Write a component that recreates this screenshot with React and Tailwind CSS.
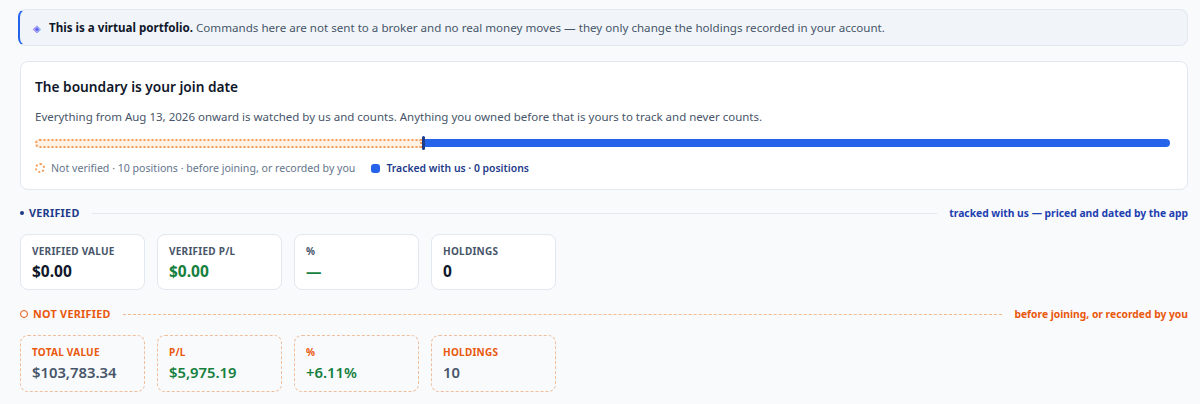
import React from 'react';

const verified = [
  { label: 'Verified value', value: '$0.00', tone: 'text-[#0f172a]' },
  { label: 'Verified P/L', value: '$0.00', tone: 'text-[#15803d]' },
  { label: '%', value: '—', tone: 'text-[#15803d]' },
  { label: 'Holdings', value: '0', tone: 'text-[#0f172a]' },
];

const unverified = [
  { label: 'Total value', value: '$103,783.34', tone: 'text-[#475569]' },
  { label: 'P/L', value: '$5,975.19', tone: 'text-[#15803d]' },
  { label: '%', value: '+6.11%', tone: 'text-[#15803d]' },
  { label: 'Holdings', value: '10', tone: 'text-[#475569]' },
];

const App = () => {
  return (
    <div
      className="min-h-screen bg-[#f8fafc] pl-[18px] pr-3 pt-[9px] pb-4 text-[#0f172a]"
      style={{ fontFamily: '"Noto Sans", "Open Sans", sans-serif' }}
    >
      {/* Banner */}
      <div className="flex items-center gap-2 h-[37px] px-[13px] bg-[#f1f5f9] border border-[#e2e8f0] border-l-2 border-l-[#2563eb] rounded-lg text-[11.6px]">
        <span className="text-[#6366f1] text-[10px] leading-none">◈</span>
        <p className="text-[#475569] whitespace-nowrap">
          <b className="font-bold text-[#0f172a]">This is a virtual portfolio.</b>{' '}
          Commands here are not sent to a broker and no real money moves — they only change the holdings recorded in your account.
        </p>
      </div>

      {/* Boundary card */}
      <div className="mt-[15px] ml-[2px] bg-white border border-[#e2e8f0] rounded-lg px-[14px] pt-[15px] pb-[11px]">
        <h2 className="text-[13.7px] font-semibold leading-5">The boundary is your join date</h2>
        <p className="mt-[10px] text-[11.5px] text-[#475569] leading-5">
          Everything from Aug 13, 2026 onward is watched by us and counts. Anything you owned before that is yours to track and never counts.
        </p>
        <div className="mt-[9px] flex items-center h-[14px] pr-[3px]">
          <div className="w-[387px] h-[9px] rounded-l-full border-2 border-dotted border-[#f59e5b] bg-[#fff1e4]" />
          <div className="w-[3px] h-[14px] bg-[#1e3a8a] rounded-sm" />
          <div className="flex-1 h-[8px] rounded-r-full bg-[#2563eb]" />
        </div>
        <div className="mt-[8px] flex items-center gap-4 text-[10.6px] leading-5">
          <span className="flex items-center gap-[6px] text-[#64748b]">
            <span className="w-[10px] h-[10px] rounded-full border-2 border-dotted border-[#f59e5b]" />
            Not verified · 10 positions · before joining, or recorded by you
          </span>
          <span className="flex items-center gap-[6px] font-semibold text-[#1e3a8a] text-[10.4px]">
            <span className="w-[9px] h-[9px] rounded-[3px] bg-[#2563eb]" />
            Tracked with us · 0 positions
          </span>
        </div>
      </div>

      {/* Verified section */}
      <div className="mt-[15px] ml-[2px] flex items-center gap-3 text-[10.8px] font-bold leading-4">
        <span className="flex items-center gap-[5px] text-[#1e3a8a] tracking-wide">
          <span className="w-[4px] h-[4px] rounded-full bg-[#1e3a8a]" />
          VERIFIED
        </span>
        <span className="flex-1 border-t border-[#e2e8f0]" />
        <span className="text-[#1e40af] text-[10.3px]">tracked with us — priced and dated by the app</span>
      </div>
      <div className="mt-[13px] ml-[2px] flex gap-3">
        {verified.map((c) => (
          <div key={c.label} className="w-[125px] h-[56px] bg-white border border-[#e2e8f0] rounded-lg px-[11px] pt-[10px]">
            <div className="text-[10px] font-bold uppercase tracking-wide text-[#475569] leading-3">{c.label}</div>
            <div className={`mt-[4px] text-[15.5px] font-bold leading-5 ${c.tone}`}>{c.value}</div>
          </div>
        ))}
      </div>

      {/* Not verified section */}
      <div className="mt-[16px] ml-[2px] flex items-center gap-3 text-[10.8px] font-bold leading-4">
        <span className="flex items-center gap-[5px] text-[#ea580c] tracking-wide">
          <span className="w-[8px] h-[8px] rounded-full border-[1.5px] border-[#ea580c]" />
          NOT VERIFIED
        </span>
        <span className="flex-1 border-t border-dashed border-[#f6b98e]" />
        <span className="text-[#ea580c] text-[10.3px]">before joining, or recorded by you</span>
      </div>
      <div className="mt-[13px] ml-[2px] flex gap-3">
        {unverified.map((c) => (
          <div key={c.label} className="w-[125px] h-[57px] bg-[#f8fafc] border border-dashed border-[#efbe9c] rounded-lg px-[11px] pt-[10px]">
            <div className="text-[10px] font-bold uppercase tracking-wide text-[#ea580c] leading-3">{c.label}</div>
            <div className={`mt-[4px] text-[14.8px] font-semibold leading-5 ${c.tone}`}>{c.value}</div>
          </div>
        ))}
      </div>
    </div>
  );
};

export default App;
